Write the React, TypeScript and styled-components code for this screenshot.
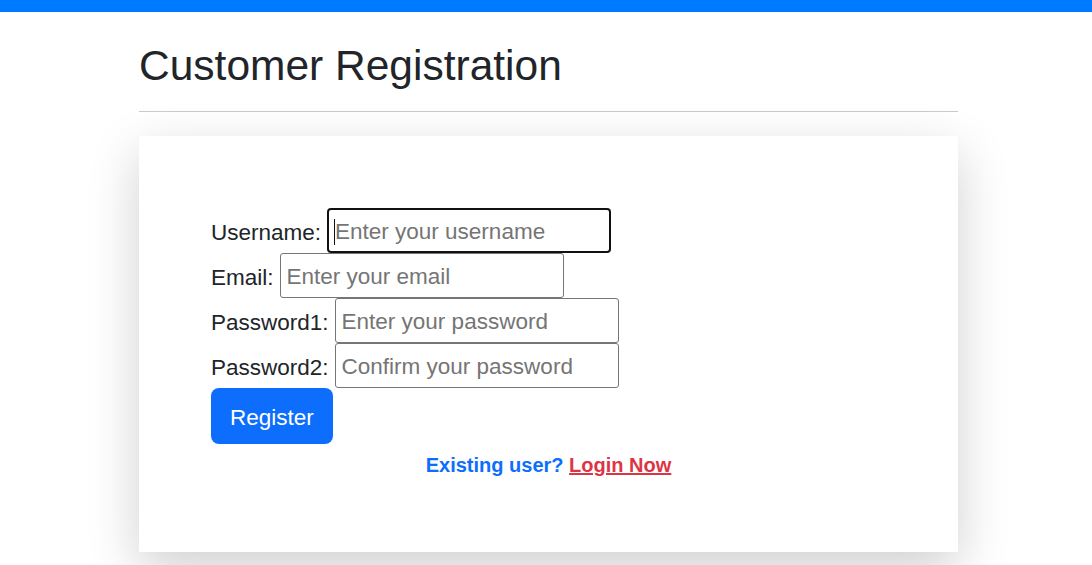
import styled, { createGlobalStyle } from 'styled-components'

const GlobalStyle = createGlobalStyle`
  body {
    margin: 0;
    background: #fff;
    font-family: 'Liberation Sans', Arial, sans-serif;
    color: #212529;
  }
`

const TopBar = styled.div`
  height: 12px;
  background-color: #007bff;
`

const Page = styled.main`
  padding: 28px 134px 14px 139px;
`

const Title = styled.h1`
  margin: 0;
  font-size: 42.5px;
  font-weight: 400;
  line-height: 1.2;
  color: #212529;
`

const Rule = styled.hr`
  margin: 20px 0 0;
  border: 0;
  border-top: 1px solid #cacbcc;
`

const Card = styled.section`
  margin-top: 24px;
  padding: 72px;
  background: #fff;
  box-shadow: 0 17px 48px rgba(0, 0, 0, 0.19);
`

const Form = styled.form`
  display: flex;
  flex-direction: column;
  align-items: flex-start;
`

const Row = styled.div`
  display: flex;
  align-items: center;
  gap: 6px;
  height: 45px;
`

const Label = styled.label`
  padding-top: 4px;
  font-size: 22.5px;
  color: #212529;
`

const InputWrap = styled.span`
  position: relative;
  display: inline-flex;
`

const Caret = styled.span`
  position: absolute;
  left: 7px;
  top: 11px;
  width: 1px;
  height: 26px;
  background: #111;
`

const TextInput = styled.input<{ $focused?: boolean }>`
  box-sizing: border-box;
  width: 284px;
  height: 45px;
  padding: 3px 6px 0;
  font-family: inherit;
  font-size: 22.5px;
  color: #212529;
  border: ${({ $focused }) => ($focused ? '2px solid #111' : '1px solid #767676')};
  border-radius: ${({ $focused }) => ($focused ? '4px' : '3px')};
  outline: none;
  background: #fff;

  &::placeholder {
    color: #757575;
  }
`

const Button = styled.button`
  height: 56px;
  padding: 4px 19px 0;
  border: 0;
  border-radius: 8px;
  background-color: #0d6efd;
  color: #fff;
  font-family: inherit;
  font-size: 22.5px;
  cursor: pointer;
`

const Footer = styled.p`
  margin: 6px 0 0;
  text-align: center;
  font-size: 20px;
  font-weight: 700;
  line-height: 30px;
  color: #0d6efd;
`

const LoginLink = styled.a`
  color: #dc3545;
  text-decoration: underline;
`

const fields = [
  { id: 'username', label: 'Username:', type: 'text', placeholder: 'Enter your username', focused: true },
  { id: 'email', label: 'Email:', type: 'email', placeholder: 'Enter your email' },
  { id: 'password1', label: 'Password1:', type: 'password', placeholder: 'Enter your password' },
  { id: 'password2', label: 'Password2:', type: 'password', placeholder: 'Confirm your password' },
]

export default function App() {
  return (
    <>
      <GlobalStyle />
      <TopBar />
      <Page>
        <Title>Customer Registration</Title>
        <Rule />
        <Card>
          <Form onSubmit={(e) => e.preventDefault()}>
            {fields.map((f) => (
              <Row key={f.id}>
                <Label htmlFor={f.id}>{f.label}</Label>
                <InputWrap>
                  <TextInput id={f.id} type={f.type} placeholder={f.placeholder} $focused={f.focused} />
                  {f.focused && <Caret />}
                </InputWrap>
              </Row>
            ))}
            <Button type='submit'>Register</Button>
          </Form>
          <Footer>
            Existing user? <LoginLink href='#'>Login Now</LoginLink>
          </Footer>
        </Card>
      </Page>
    </>
  )
}
